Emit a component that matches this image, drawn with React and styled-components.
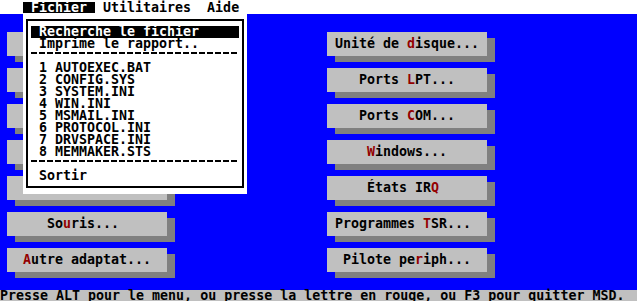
import React from "react";
import styled, { createGlobalStyle } from "styled-components";

const GlobalStyle = createGlobalStyle`
  html, body {
    margin: 0;
    padding: 0;
    background: #0000ff;
    overflow: hidden;
  }
  body {
    font-family: "DejaVu Sans Mono", "Liberation Mono", monospace;
    font-weight: bold;
    font-size: 13.3px;
  }
`;

const Screen = styled.div`
  position: relative;
  width: 637px;
  height: 301px;
  display: flex;
  flex-direction: column;
  background: #0000ff;
  overflow: hidden;
`;

const MenuBar = styled.div`
  height: 14px;
  flex: none;
  display: flex;
  align-items: flex-start;
  padding-left: 23px;
  padding-top: 2px;
  box-sizing: border-box;
  background: #ffffff;
  color: #000000;
`;

const MenuTitle = styled.div`
  height: 11px;
  line-height: 11px;
  padding: 0 8px;
  white-space: pre;
  background: ${(p) => (p.$active ? "#000000" : "transparent")};
  color: ${(p) => (p.$active ? "#ffffff" : "#000000")};
`;

const Desk = styled.div`
  flex: 1;
  min-height: 0;
  display: flex;
  gap: 152px;
  padding: 18px 0 0 7px;
`;

const Column = styled.div`
  display: flex;
  flex-direction: column;
  gap: 6px;
`;

const ButtonWrap = styled.div`
  width: 168px;
  height: 30px;
  flex: none;
  position: relative;
`;

const Shadow = styled.div`
  position: absolute;
  left: 8px;
  top: 6px;
  width: 160px;
  height: 24px;
  background: #808080;
`;

const Button = styled.div`
  position: relative;
  width: 160px;
  height: 24px;
  line-height: 24px;
  box-sizing: border-box;
  padding-left: ${(p) => p.$pad * 8}px;
  background: #c0c0c0;
  color: #000000;
  white-space: pre;
`;

const Hot = styled.span`
  color: #940000;
`;

const StatusBar = styled.div`
  height: 11px;
  flex: none;
  line-height: 11px;
  background: #c0c0c0;
  color: #000000;
  white-space: pre;
`;

const Dropdown = styled.div`
  position: absolute;
  left: 23px;
  top: 14px;
  width: 224px;
  height: 180px;
  box-sizing: border-box;
  padding: 5px 3px 6px 3px;
  background: #ffffff;
`;

const Frame = styled.div`
  height: 100%;
  box-sizing: border-box;
  border: 2px solid #000000;
  padding: 5px 3px 4px 3px;
  display: flex;
  flex-direction: column;
`;

const Item = styled.div`
  height: 12px;
  line-height: 12px;
  padding-left: 8px;
  white-space: pre;
  background: ${(p) => (p.$selected ? "#000000" : "transparent")};
  color: ${(p) => (p.$selected ? "#ffffff" : "#000000")};
`;

const Separator = styled.div`
  height: 12px;
  position: relative;
  &::after {
    content: "";
    position: absolute;
    left: 0;
    right: 1px;
    top: 2px;
    height: 2px;
    background: repeating-linear-gradient(
      to right,
      #000000 0 6px,
      transparent 6px 8px
    );
  }
`;

const leftButtons = [
  ["", "O", "rdinateur..."],
  ["", "M", "émoire..."],
  ["", "V", "idéo..."],
  ["", "R", "éseau..."],
  ["", "V", "ersion SE..."],
  ["So", "u", "ris..."],
  ["", "A", "utre adaptat..."],
];

const rightButtons = [
  ["Unité de ", "d", "isque..."],
  ["Ports ", "L", "PT..."],
  ["Ports ", "C", "OM..."],
  ["", "W", "indows..."],
  ["États IR", "Q", ""],
  ["Programmes ", "T", "SR..."],
  ["Pilote pe", "r", "iph..."],
];

const files = [
  "AUTOEXEC.BAT",
  "CONFIG.SYS",
  "SYSTEM.INI",
  "WIN.INI",
  "MSMAIL.INI",
  "PROTOCOL.INI",
  "DRVSPACE.INI",
  "MEMMAKER.STS",
];

function DeskButton({ label }) {
  const [before, hot, after] = label;
  const len = (before + hot + after).length;
  return (
    <ButtonWrap>
      <Shadow />
      <Button $pad={Math.floor((20 - len) / 2)}>
        {before}
        <Hot>{hot}</Hot>
        {after}
      </Button>
    </ButtonWrap>
  );
}

export default function App() {
  return (
    <>
      <GlobalStyle />
      <Screen>
        <MenuBar>
          <MenuTitle $active>Fichier</MenuTitle>
          <MenuTitle>Utilitaires</MenuTitle>
          <MenuTitle>Aide</MenuTitle>
        </MenuBar>
        <Desk>
          <Column>
            {leftButtons.map((b, i) => (
              <DeskButton key={i} label={b} />
            ))}
          </Column>
          <Column>
            {rightButtons.map((b, i) => (
              <DeskButton key={i} label={b} />
            ))}
          </Column>
        </Desk>
        <StatusBar>
          Presse ALT pour le menu, ou presse la lettre en rouge, ou F3 pour quitter MSD.
        </StatusBar>
        <Dropdown>
          <Frame>
            <Item $selected>Recherche le fichier</Item>
            <Item>Imprime le rapport..</Item>
            <Separator />
            {files.map((f, i) => (
              <Item key={f}>{`${i + 1} ${f}`}</Item>
            ))}
            <Separator />
            <Item>Sortir</Item>
          </Frame>
        </Dropdown>
      </Screen>
    </>
  );
}
